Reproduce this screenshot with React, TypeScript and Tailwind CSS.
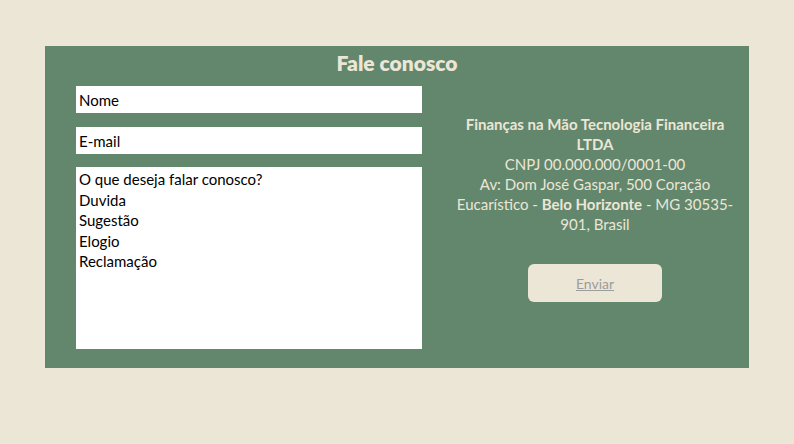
const App = () => {
    return (
        <div className="min-h-screen w-full bg-[#ece6d6] pt-[46px] font-['Lato',sans-serif]">
            <div className="ml-[45px] w-[704px] h-[322px] bg-[#62876d] flex flex-col">
                <h1 className="text-center text-[21px] leading-[32px] mt-[1px] font-extrabold text-[#ece6d6]">Fale conosco</h1>
                <div className="flex flex-1">
                    <form className="flex flex-col pl-[31px] pt-[7px] w-[377px]">
                        <input
                            type="text"
                            placeholder="Nome"
                            className="w-[346px] h-[27px] bg-white px-[3px] text-[15px] text-black placeholder:text-black outline-none"
                        />
                        <input
                            type="text"
                            placeholder="E-mail"
                            className="w-[346px] h-[27px] mt-[14px] bg-white px-[3px] text-[15px] text-black placeholder:text-black outline-none"
                        />
                        <textarea
                            className="w-[346px] h-[182px] mt-[13px] bg-white px-[3px] py-[2px] text-[15px] leading-[20.5px] text-black resize-none outline-none"
                            defaultValue={"O que deseja falar conosco?\nDuvida\nSugestão\nElogio\nReclamação"}
                        />
                    </form>
                    <div className="flex flex-col items-center pl-[32px] pr-[14px] flex-1">
                        <p className="mt-[35px] w-[282px] text-center text-[15px] leading-[20px] text-[#ece6d6]">
                            <span className="font-bold">Finanças na Mão Tecnologia Financeira LTDA</span>
                            <br />
                            CNPJ 00.000.000/0001-00
                            <br />
                            Av: Dom José Gaspar, 500 Coração Eucarístico - <span className="font-bold">Belo Horizonte</span> - MG 30535-901, Brasil
                        </p>
                        <button
                            type="button"
                            className="mt-[30px] w-[134px] h-[38px] rounded-[6px] bg-[#ece6d6] text-[14px] text-[#9c9c9c] underline"
                        >
                            Enviar
                        </button>
                    </div>
                </div>
            </div>
        </div>
    );
};

export default App;
